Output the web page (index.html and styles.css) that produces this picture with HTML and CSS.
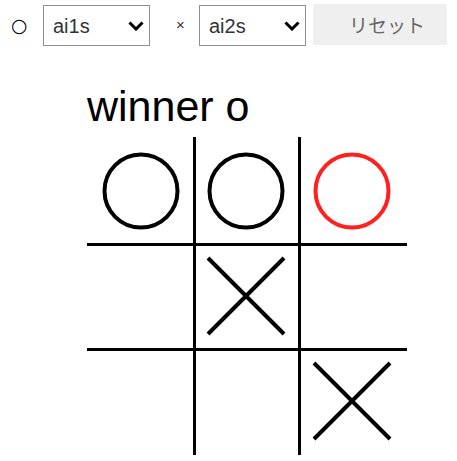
FILE: index.html
```html
<!DOCTYPE html>
<html lang="ja">
<head>
<meta charset="utf-8">
<title>tic tac toe</title>
<link rel="stylesheet" href="styles.css">
</head>
<body>
<div class="toolbar">
  <span class="mark-o">○</span>
  <span class="pick">
    <select class="sel"><option>ai1s</option></select>
    <svg class="chev" width="16" height="10" viewBox="0 0 16 10"><path d="M1.5 1.5 L8 8 L14.5 1.5" fill="none" stroke="#000" stroke-width="3"/></svg>
  </span>
  <span class="mark-x">×</span>
  <span class="pick">
    <select class="sel"><option>ai2s</option></select>
    <svg class="chev" width="16" height="10" viewBox="0 0 16 10"><path d="M1.5 1.5 L8 8 L14.5 1.5" fill="none" stroke="#000" stroke-width="3"/></svg>
  </span>
  <button class="reset">リセット</button>
</div>
<h1 class="status">winner o</h1>
<div class="board">
  <div class="cell c1 r1"><svg width="100" height="100" viewBox="0 0 100 100"><circle cx="50" cy="50" r="36.5" fill="none" stroke="#000" stroke-width="4"/></svg></div>
  <div class="cell r1"><svg width="100" height="100" viewBox="0 0 100 100"><circle cx="50" cy="50" r="36.5" fill="none" stroke="#000" stroke-width="4"/></svg></div>
  <div class="cell r1"><svg width="100" height="100" viewBox="0 0 100 100"><circle cx="51" cy="50" r="36.5" fill="none" stroke="#ff2020" stroke-width="4"/></svg></div>
  <div class="cell c1"></div>
  <div class="cell"><svg width="100" height="100" viewBox="0 0 100 100"><path d="M12 12 L88 88 M88 12 L12 88" stroke="#000" stroke-width="4" fill="none"/></svg></div>
  <div class="cell"></div>
  <div class="cell c1"></div>
  <div class="cell"></div>
  <div class="cell"><svg width="100" height="100" viewBox="0 0 100 100"><path d="M13 12 L89 88 M89 12 L13 88" stroke="#000" stroke-width="4" fill="none"/></svg></div>
</div>
</body>
</html>
```
FILE: styles.css
```css
html, body {
  margin: 0;
  padding: 0;
  background: #fff;
}
body {
  font-family: "Liberation Sans", Arial, "Noto Sans CJK JP", sans-serif;
  color: #000;
}
.toolbar {
  display: flex;
  align-items: center;
  height: 41px;
  padding-top: 4px;
}
.mark-o {
  font-family: "DejaVu Sans", sans-serif;
  font-size: 19px;
  margin-left: 11px;
  width: 32px;
  color: #000;
}
.pick {
  position: relative;
  display: inline-flex;
  margin-top: 2px;
}
.sel {
  appearance: none;
  -webkit-appearance: none;
  width: 107px;
  height: 41px;
  box-sizing: border-box;
  border: 1px solid #8f8f8f;
  border-radius: 0;
  background: #fff;
  padding: 0 0 0 9px;
  font-family: "Liberation Sans", Arial, sans-serif;
  font-size: 20px;
  color: #333;
  outline: none;
}
.chev {
  position: absolute;
  right: 6px;
  top: 16px;
  pointer-events: none;
}
.mark-x {
  box-sizing: border-box;
  font-family: "Liberation Sans", Arial, sans-serif;
  font-size: 15px;
  width: 49px;
  padding-left: 12px;
  text-align: center;
  color: #333;
}
.reset {
  margin-left: 7px;
  width: 134px;
  height: 41px;
  border: none;
  background: #efefef;
  color: #666;
  font-family: "Noto Sans CJK JP", sans-serif;
  font-size: 19px;
  padding: 0 0 0 14px;
  text-align: center;
}
.status {
  margin: 37px 0 0 87px;
  font-family: "Liberation Sans", Arial, sans-serif;
  font-size: 43px;
  font-weight: normal;
  line-height: 48px;
  height: 48px;
}
.board {
  display: grid;
  grid-template-columns: 106px 102px 106px;
  grid-template-rows: 106px 102px 104px;
  gap: 3px;
  background: #000;
  width: 320px;
  margin: 7px 0 0 87px;
}
.cell {
  background: #fff;
  display: flex;
  align-items: flex-start;
  justify-content: flex-start;
}
.c1 {
  padding-left: 4px;
}
.r1 {
  padding-top: 4px;
}
```
